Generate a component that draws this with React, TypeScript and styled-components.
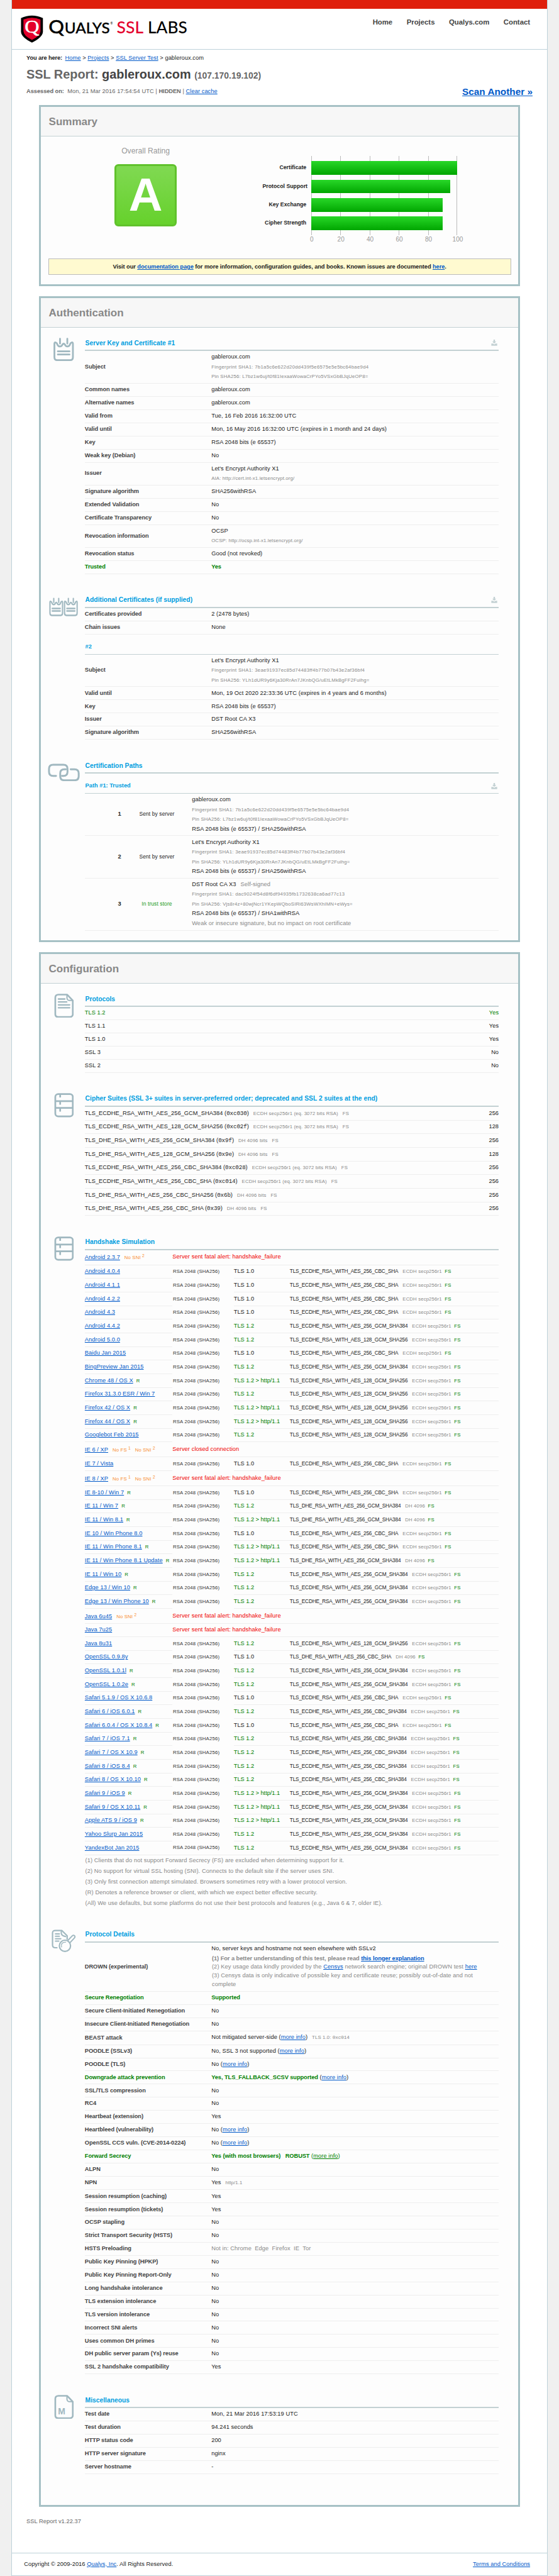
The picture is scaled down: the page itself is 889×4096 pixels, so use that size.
import React from "react";
import styled, { createGlobalStyle, css } from "styled-components";

const C = {
  frame: "#a6c1c5",
  rule: "#c3d1d3",
  hair: "#eeeeee",
  link: "#0059c9",
  title: "#009de0",
  icon: "#a0b8c0",
  green: "#008000",
  orange: "#f88c2e",
  muted: "#888888",
};

const Global = createGlobalStyle`
  html, body { margin: 0; padding: 0; background: #f0f0f0; }
  * { box-sizing: border-box; }
`;

/* ---------- page frame ---------- */

const Viewport = styled.div`
  zoom: 0.77439;
  width: 1148px;
  height: 5289px;
  font: 12px/20px "Liberation Sans", Arial, sans-serif;
  letter-spacing: 0.08px;
  color: #222;
  overflow: hidden;
`;

const Page = styled.div`
  width: 1102px;
  height: 5289px;
  margin: 0 auto;
  display: flex;
  flex-direction: column;
  background: #fff;
  border: 1px solid #bed2da;
  border-top: 0;
`;

const RedBar = styled.div`
  height: 18px;
  flex: none;
  background: #df1f0c;
`;

const Header = styled.header`
  height: 84px;
  flex: none;
  display: flex;
  justify-content: space-between;
  padding: 13px 35px 0 18px;
  border-bottom: 1px solid #bed2da;
`;

const Nav = styled.nav`
  display: flex;
  gap: 29px;
  padding-top: 4px;
  font-size: 14.67px;
  font-weight: bold;
  line-height: 22px;
  color: #444;
  letter-spacing: 0;
`;

const Link = styled.a<{ $color?: string }>`
  color: ${(p) => p.$color ?? C.link};
  text-decoration: underline;
  text-decoration-thickness: 1px;
`;

const Intro = styled.div`
  height: 114px;
  flex: none;
  padding: 0 30px;
`;

const Crumbs = styled.div`
  height: 20px;
  margin-top: 7.5px;
  b {
    letter-spacing: -0.17px;
    margin-right: 6px;
  }
`;

const ReportTitle = styled.h1`
  margin: 7.5px 0 0;
  font-size: 25.7px;
  line-height: 32px;
  letter-spacing: 0;
  color: #666;
  strong {
    color: #444;
  }
  small {
    font-size: 18px;
  }
`;

const Assessed = styled.div`
  display: flex;
  justify-content: space-between;
  align-items: center;
  height: 24px;
  margin-top: 5px;
  color: #666;
  b {
    letter-spacing: -0.05px;
  }
`;

const ScanAnother = styled.a`
  color: ${C.link};
  font-size: 19.8px;
  font-weight: bold;
  letter-spacing: 0;
  text-decoration: underline;
`;

/* ---------- panels ---------- */

const Panel = styled.section<{ $h: number }>`
  width: 988px;
  height: ${(p) => p.$h}px;
  flex: none;
  margin: 0 0 20px 56px;
  border: 4px solid ${C.frame};
  background: #fdfdfd;
`;

const PanelHead = styled.h2`
  height: 61px;
  margin: 0;
  padding: 0 16px;
  border-bottom: 1px solid ${C.rule};
  background: #f7f7f7;
  color: #888;
  font-size: 22px;
  line-height: 61px;
  letter-spacing: 0;
`;

/* ---------- summary ---------- */

const SummaryBody = styled.div`
  display: flex;
  height: 250px;
`;

const Rating = styled.div`
  width: 430px;
  padding-top: 20px;
  display: flex;
  flex-direction: column;
  align-items: center;
  color: #999;
  font-size: 15.7px;
  letter-spacing: 0;
`;

const Grade = styled.div`
  width: 128px;
  height: 128px;
  margin-top: 16px;
  border: 4px solid #60c22c;
  border-radius: 8px;
  background: linear-gradient(#80d952, #66d12c);
  color: #fff;
  font-size: 96px;
  font-weight: bold;
  line-height: 120px;
  text-align: center;
`;

const Chart = styled.div`
  width: 430px;
  margin: 40px 0 0 25px;
  display: grid;
  grid-template-columns: 100px 300px;
  align-content: start;
`;

const ChartLabels = styled.div`
  height: 162px;
  padding: 10px 10px 0 0;
  display: flex;
  flex-direction: column;
  gap: 10px;
  text-align: right;
  font-size: 11.3px;
  font-weight: bold;
  line-height: 28px;
  white-space: nowrap;
  letter-spacing: 0;
`;

const Plot = styled.div`
  height: 162px;
  padding-top: 10px;
  display: flex;
  flex-direction: column;
  gap: 10px;
  border-right: 1px solid #bbb;
  background: repeating-linear-gradient(90deg, #bbb 0 1.29px, transparent 1.29px 60px);
`;

const Bar = styled.div`
  height: 28px;
  background: linear-gradient(#28d728, #00a600);
`;

const Ticks = styled.div`
  grid-column: 2;
  display: flex;
  justify-content: space-between;
  margin: 0 -31px 0 -29px;
  color: #999;
  font-size: 13px;
  line-height: 18px;
  letter-spacing: 0;
  span {
    width: 60px;
    text-align: center;
  }
`;

const Notice = styled.div`
  width: 950px;
  height: 34px;
  margin: 0 auto;
  border: 1px solid #bbb;
  background: #fffad0;
  font-weight: bold;
  line-height: 32px;
  text-align: center;
  letter-spacing: -0.1px;
`;

/* ---------- report sections ---------- */

const SectionBox = styled.div`
  display: flex;
`;

const IconCell = styled.div<{ $top: number }>`
  width: 90px;
  flex: none;
  display: flex;
  justify-content: center;
  align-items: flex-start;
  padding: ${(p) => p.$top}px 0 0 4px;
  svg {
    display: block;
  }
`;

const SectionBody = styled.div`
  width: 850px;
  flex: none;
`;

const SectionTitle = styled.h3<{ $h: number; $thin?: boolean }>`
  height: ${(p) => p.$h}px;
  margin: 0;
  padding: 0 3px 4px 1px;
  display: flex;
  justify-content: space-between;
  align-items: flex-end;
  border-bottom: ${(p) => (p.$thin ? 1 : 2.6)}px solid ${C.rule};
  color: ${C.title};
  font-size: ${(p) => (p.$thin ? 12 : 13.33)}px;
  letter-spacing: -0.01px;
  svg {
    margin-bottom: 4px;
  }
`;

const rowRule = css`
  border-bottom: 1px solid ${C.hair};
`;

const Row = styled.div<{ $h: number }>`
  display: grid;
  grid-template-columns: 260px 1fr;
  align-items: center;
  height: ${(p) => p.$h}px;
  ${rowRule}
  white-space: nowrap;
`;

const Name = styled.div<{ $good?: boolean }>`
  font-weight: bold;
  letter-spacing: -0.11px;
  color: ${(p) => (p.$good ? C.green : "#444")};
`;

const Small = styled.div<{ $track?: number }>`
  color: ${C.muted};
  font-size: 10px;
  letter-spacing: ${(p) => p.$track ?? 0.39}px;
`;

const Tag = styled.span<{ $color?: string; $gap?: number }>`
  margin-left: ${(p) => p.$gap ?? 9}px;
  color: ${(p) => p.$color ?? C.muted};
  font-size: 10px;
  letter-spacing: 0.2px;
  sup {
    font-size: 8.5px;
    line-height: 0;
    vertical-align: 4.5px;
  }
`;

const Good = styled.b`
  color: ${C.green};
  letter-spacing: -0.1px;
`;

const Hex = styled.span`
  font-family: "Liberation Mono", monospace;
  letter-spacing: -0.2px;
`;

const Split = styled.div<{ $h: number; $good?: boolean }>`
  display: flex;
  justify-content: space-between;
  align-items: center;
  height: ${(p) => p.$h}px;
  ${rowRule}
  letter-spacing: 0.03px;
  color: ${(p) => (p.$good ? C.green : "inherit")};
`;

const PathRow = styled.div<{ $h: number }>`
  display: grid;
  grid-template-columns: 43px 110px 1fr;
  align-items: center;
  height: ${(p) => p.$h}px;
  padding-left: 50px;
  ${rowRule}
`;

const Index = styled.b`
  text-align: center;
`;

const Status = styled.div<{ $good?: boolean }>`
  text-align: center;
  font-size: 11px;
  letter-spacing: 0.1px;
  color: ${(p) => (p.$good ? "#1a9a1a" : "inherit")};
`;

const PathInfo = styled.div`
  padding-left: 17px;
`;

const Muted = styled.span<{ $gap?: number }>`
  color: ${C.muted};
  letter-spacing: 0.12px;
  margin-left: ${(p) => p.$gap ?? 0}px;
`;

const SimRow = styled.div<{ $h: number }>`
  display: grid;
  grid-template-columns: 180px 126px 1fr;
  height: ${(p) => p.$h}px;
  white-space: nowrap;
`;

const SimCell = styled.div<{ $bare?: boolean; $span?: boolean; $low?: boolean }>`
  display: flex;
  align-items: center;
  padding-top: ${(p) => (p.$low ? 2 : 0)}px;
  grid-column: ${(p) => (p.$span ? "2 / 4" : "auto")};
  border-bottom: ${(p) => (p.$bare ? "0" : `1px solid ${C.hair}`)};
`;

const KeyInfo = styled.span`
  padding: 0 0 1px 1px;
  font-size: 10px;
  letter-spacing: 0.25px;
  color: #333;
`;

const Proto = styled.span<{ $good?: boolean }>`
  width: 115px;
  letter-spacing: -0.05px;
  color: ${(p) => (p.$good ? C.green : "inherit")};
`;

const Suite = styled.span`
  font-size: 10.67px;
  letter-spacing: -0.24px;
`;

const Failure = styled.span`
  color: #f00000;
  letter-spacing: 0.1px;
`;

const Notes = styled.div`
  padding-left: 1px;
  line-height: 22px;
  letter-spacing: 0.1px;
  color: ${C.muted};
`;

const DrownNotes = styled.div`
  padding: 1px;
  line-height: 18px;
  letter-spacing: 0.12px;
  color: ${C.muted};
  b {
    letter-spacing: -0.07px;
  }
`;

const Version = styled.div`
  padding: 1px 30px 0;
  flex: 1;
  color: #666;
`;

const Footer = styled.footer`
  height: 46px;
  flex: none;
  display: flex;
  justify-content: space-between;
  align-items: center;
  padding: 0 35px 0 25px;
  border-top: 1px solid #bed2da;
`;

/* ---------- drawings ---------- */

const Logo = () => (
  <svg width="346" height="58" viewBox="0 0 346 58">
    <path d="M0.5 6 Q23 -4 45.5 6 V34 Q45 46 23 56.5 Q1 46 0.5 34 Z" fill="#000" />
    <path d="M5.5 9 Q23 2 40.5 9 V33 Q40 43 23 51 Q6 43 5.5 33 Z" fill="#e4002b" />
    <text x="8" y="36.5" fontFamily="'Liberation Serif', serif" fontSize="38" letterSpacing="0" fill="#fff" stroke="#fff" strokeWidth="0.7" textLength="30" lengthAdjust="spacingAndGlyphs">Q</text>
    <g fontFamily="Lato, sans-serif" fontWeight="500" letterSpacing="0">
      <text x="57" y="37" fontSize="36" stroke="#000" strokeWidth="0.5" textLength="32" lengthAdjust="spacingAndGlyphs">Q</text>
      <text x="90" y="37" fontSize="29.5" stroke="#000" strokeWidth="0.4" textLength="93" lengthAdjust="spacingAndGlyphs">UALYS</text>
      <text x="184" y="19" fontSize="6">®</text>
      <text x="197" y="37" fontSize="35" fill="#e4002b" textLength="55" lengthAdjust="spacingAndGlyphs">SSL</text>
      <text x="261" y="37" fontSize="35" textLength="81" lengthAdjust="spacingAndGlyphs">LABS</text>
    </g>
  </svg>
);

const Sheet = () => (
  <>
    <path d="M2 12 Q2 8.5 5 10 Q7.500 11 8 14 Q10 18 13.500 18 Q17 18 18.500 14 Q21 10.500 23.500 14 Q25 18 28.500 18 Q32.500 18 34 14 Q34.500 11 37 10 Q40 8.500 40 12 V40 Q40 46 34.500 46 H7.500 Q2 46 2 40 Z" />
    <path d="M13.500 2 V12 M28.500 2 V12 M9 28 H33 M9 34.500 H33" />
  </>
);

const stroke = {
  fill: "none",
  stroke: C.icon,
  strokeLinecap: "round" as const,
  strokeLinejoin: "round" as const,
};

const CertIcon = () => (
  <svg width="42" height="48" viewBox="0 0 42 48" {...stroke} strokeWidth="3.6">
    <Sheet />
  </svg>
);

const CertsIcon = () => (
  <svg width="60" height="39" viewBox="0 0 60 39" {...stroke} strokeWidth="3.9">
    <g transform="translate(0.5 0.5) scale(0.68 0.79)">
      <Sheet />
    </g>
    <g transform="translate(30.5 0.5) scale(0.68 0.79)">
      <Sheet />
    </g>
  </svg>
);

const ChainIcon = () => (
  <svg width="66" height="37" viewBox="0 0 66 37" {...stroke} strokeWidth="3.8">
    <path d="M17 25.5 H11 Q2.5 25.5 2.5 17 V11 Q2.5 2.5 11 2.5 H32 Q40.5 2.5 40.5 11 V17 Q40.5 25.5 32 25.5 H29" />
    <path d="M37 12 H34 Q25.500 12 25.500 20 V26 Q25.500 34.500 34 34.500 H55 Q63.500 34.500 63.500 26 V20 Q63.500 12 55 12 H47" />
  </svg>
);

const DocIcon = ({ letter }: { letter?: string }) => (
  <svg width="41" height="50" viewBox="0 0 41 50" {...stroke} strokeWidth="3.4">
    <path d="M9 2 H27 L38.500 14 V42 Q38.500 48 32 48 H9 Q2.500 48 2.500 42 V8 Q2.500 2 9 2 Z" />
    <path d="M26.500 3 V9 Q27 14 32 14 H37" strokeWidth="2.6" />
    {letter ? (
      <text x="8" y="40.500" fontFamily="'Liberation Sans', sans-serif" fontWeight="bold" fontSize="18" letterSpacing="0" fill={C.icon} stroke="none">
        {letter}
      </text>
    ) : (
      <path d="M9 11 H22 M9 17 H26 M9 23 H32 M9 29 H32" strokeWidth="3" />
    )}
  </svg>
);

const DrawersIcon = () => (
  <svg width="41" height="50" viewBox="0 0 41 50" {...stroke} strokeWidth="3.5">
    <rect x="2.500" y="2" width="36" height="46" rx="6" />
    <path d="M2.500 16.500 H38.500 M2.500 30.500 H38.500 M12.500 3 V9 M12.500 17 V24 M12.500 31 V38" strokeLinecap="butt" />
  </svg>
);

const InspectIcon = () => (
  <svg width="50" height="47" viewBox="0 0 50 47" {...stroke} strokeWidth="2.8">
    <path d="M11 37.500 H8 Q2 37.500 2 32 V7 Q2 2 8 2 H21 L32 13 V20" />
    <path d="M20 4 V8 Q21 13 29 14.500 M8 9 H16 M8 14 H16 M8 19 H19 M8 24 H15" strokeWidth="2.6" />
    <ellipse cx="27.500" cy="33.500" rx="11.500" ry="11.500" />
    <path d="M20.500 36 Q18.500 26 29 26" strokeWidth="1.800" />
    <path d="M34 22 L42.500 13 Q46 10.500 48 14 Q48.500 16 46.500 18 L38 27" strokeWidth="2.500" />
  </svg>
);

const DownloadIcon = () => (
  <svg width="13" height="13" viewBox="0 0 13 13" fill="#c3d1d3">
    <path d="M5 0 H8 V4 H10.500 L6.500 8 L2.500 4 H5 Z M0.500 8 H4 L6.500 10 L9 8 H12.500 V12.500 H0.500 Z" />
  </svg>
);

/* ---------- building blocks ---------- */

type SectionProps = {
  icon: React.ReactNode;
  iconTop: number;
  title: string;
  first?: boolean;
  download?: boolean;
  children: React.ReactNode;
};

const Section = ({ icon, iconTop, title, first, download, children }: SectionProps) => (
  <SectionBox>
    <IconCell $top={iconTop}>{icon}</IconCell>
    <SectionBody>
      <SectionTitle $h={first ? 48 : 70}>
        {title}
        {download && <DownloadIcon />}
      </SectionTitle>
      {children}
    </SectionBody>
  </SectionBox>
);

type Fact = [string, React.ReactNode, { h?: number; good?: boolean }?];

const Facts = ({ rows }: { rows: Fact[] }) => (
  <>
    {rows.map(([name, value, o]) => (
      <Row key={name} $h={o?.h ?? 27}>
        <Name $good={o?.good}>{name}</Name>
        <div>{value}</div>
      </Row>
    ))}
  </>
);

const Aside = styled.span<{ $color?: string }>`
  color: ${(p) => p.$color ?? "inherit"};
`;

const MoreInfo = ({ color }: { color?: string }) => (
  <Aside $color={color}>
    {" "}(<Link $color={color}>more info</Link>)
  </Aside>
);

/* ---------- data ---------- */

const scores: [string, number][] = [
  ["Certificate", 100],
  ["Protocol Support", 95],
  ["Key Exchange", 90],
  ["Cipher Strength", 90],
];

const leafPins = (
  <>
    <Small>Fingerprint SHA1: 7b1a5c6e622d20dd439f5e6575e5e5bc64bae9d4</Small>
    <Small $track={0.28}>Pin SHA256: L7bz1w6uj/t0f81IexaaWowaCrPYo5VSxGbBJqUeOP8=</Small>
  </>
);

const issuerPins = (
  <>
    <Small>Fingerprint SHA1: 3eae91937ec85d74483ff4b77b07b43e2af36bf4</Small>
    <Small $track={0.28}>Pin SHA256: YLh1dUR9y6Kja30RrAn7JKnbQG/uEtLMkBgFF2Fuihg=</Small>
  </>
);

const serverKey: Fact[] = [
  ["Subject", <>gableroux.com{leafPins}</>, { h: 67 }],
  ["Common names", "gableroux.com"],
  ["Alternative names", "gableroux.com"],
  ["Valid from", "Tue, 16 Feb 2016 16:32:00 UTC"],
  ["Valid until", "Mon, 16 May 2016 16:32:00 UTC (expires in 1 month and 24 days)"],
  ["Key", "RSA 2048 bits (e 65537)"],
  ["Weak key (Debian)", "No"],
  ["Issuer", <>Let's Encrypt Authority X1<Small $track={0.23}>AIA: http://cert.int-x1.letsencrypt.org/</Small></>, { h: 47 }],
  ["Signature algorithm", "SHA256withRSA"],
  ["Extended Validation", "No"],
  ["Certificate Transparency", "No"],
  ["Revocation information", <>OCSP<Small $track={0.23}>OCSP: http://ocsp.int-x1.letsencrypt.org/</Small></>, { h: 47 }],
  ["Revocation status", "Good (not revoked)"],
  ["Trusted", <Good>Yes</Good>, { good: true }],
];

const secondCert: Fact[] = [
  ["Subject", <>Let's Encrypt Authority X1{issuerPins}</>, { h: 67 }],
  ["Valid until", "Mon, 19 Oct 2020 22:33:36 UTC (expires in 4 years and 6 months)"],
  ["Key", "RSA 2048 bits (e 65537)"],
  ["Issuer", "DST Root CA X3"],
  ["Signature algorithm", "SHA256withRSA"],
];

const protocols: [string, string][] = [
  ["TLS 1.2", "Yes"],
  ["TLS 1.1", "Yes"],
  ["TLS 1.0", "Yes"],
  ["SSL 3", "No"],
  ["SSL 2", "No"],
];

const EC = "ECDH secp256r1 (eq. 3072 bits RSA)";
const DH = "DH 4096 bits";
const suites: [string, string, string, number][] = [
  ["TLS_ECDHE_RSA_WITH_AES_256_GCM_SHA384", "0xc030", EC, 256],
  ["TLS_ECDHE_RSA_WITH_AES_128_GCM_SHA256", "0xc02f", EC, 128],
  ["TLS_DHE_RSA_WITH_AES_256_GCM_SHA384", "0x9f", DH, 256],
  ["TLS_DHE_RSA_WITH_AES_128_GCM_SHA256", "0x9e", DH, 128],
  ["TLS_ECDHE_RSA_WITH_AES_256_CBC_SHA384", "0xc028", EC, 256],
  ["TLS_ECDHE_RSA_WITH_AES_256_CBC_SHA", "0xc014", EC, 256],
  ["TLS_DHE_RSA_WITH_AES_256_CBC_SHA256", "0x6b", DH, 256],
  ["TLS_DHE_RSA_WITH_AES_256_CBC_SHA", "0x39", DH, 256],
];

const suiteNames = {
  cbc: "TLS_ECDHE_RSA_WITH_AES_256_CBC_SHA",
  cbc384: "TLS_ECDHE_RSA_WITH_AES_256_CBC_SHA384",
  gcm256: "TLS_ECDHE_RSA_WITH_AES_256_GCM_SHA384",
  gcm128: "TLS_ECDHE_RSA_WITH_AES_128_GCM_SHA256",
  dhGcm: "TLS_DHE_RSA_WITH_AES_256_GCM_SHA384",
  dhCbc: "TLS_DHE_RSA_WITH_AES_256_CBC_SHA",
};

type Sim = {
  client: string;
  suite?: keyof typeof suiteNames;
  v?: "1.0" | "1.2" | "1.2 > http/1.1";
  ref?: boolean;
  noFs?: boolean;
  noSni?: boolean;
  fail?: string;
};

const ok = (client: string, v: Sim["v"], suite: Sim["suite"], ref = false): Sim => ({ client, v, suite, ref });
const H = "1.2 > http/1.1" as const;
const ALERT = "Server sent fatal alert: handshake_failure";

const sims: Sim[] = [
  { client: "Android 2.3.7", noSni: true, fail: ALERT },
  ok("Android 4.0.4", "1.0", "cbc"),
  ok("Android 4.1.1", "1.0", "cbc"),
  ok("Android 4.2.2", "1.0", "cbc"),
  ok("Android 4.3", "1.0", "cbc"),
  ok("Android 4.4.2", "1.2", "gcm256"),
  ok("Android 5.0.0", "1.2", "gcm128"),
  ok("Baidu Jan 2015", "1.0", "cbc"),
  ok("BingPreview Jan 2015", "1.2", "gcm256"),
  ok("Chrome 48 / OS X", H, "gcm128", true),
  ok("Firefox 31.3.0 ESR / Win 7", "1.2", "gcm128"),
  ok("Firefox 42 / OS X", H, "gcm128", true),
  ok("Firefox 44 / OS X", H, "gcm128", true),
  ok("Googlebot Feb 2015", "1.2", "gcm128"),
  { client: "IE 6 / XP", noFs: true, noSni: true, fail: "Server closed connection" },
  ok("IE 7 / Vista", "1.0", "cbc"),
  { client: "IE 8 / XP", noFs: true, noSni: true, fail: ALERT },
  ok("IE 8-10 / Win 7", "1.0", "cbc", true),
  ok("IE 11 / Win 7", "1.2", "dhGcm", true),
  ok("IE 11 / Win 8.1", H, "dhGcm", true),
  ok("IE 10 / Win Phone 8.0", "1.0", "cbc"),
  ok("IE 11 / Win Phone 8.1", H, "cbc", true),
  ok("IE 11 / Win Phone 8.1 Update", H, "dhGcm", true),
  ok("IE 11 / Win 10", "1.2", "gcm256", true),
  ok("Edge 13 / Win 10", "1.2", "gcm256", true),
  ok("Edge 13 / Win Phone 10", "1.2", "gcm256", true),
  { client: "Java 6u45", noSni: true, fail: ALERT },
  { client: "Java 7u25", fail: ALERT },
  ok("Java 8u31", "1.2", "gcm128"),
  ok("OpenSSL 0.9.8y", "1.0", "dhCbc"),
  ok("OpenSSL 1.0.1l", "1.2", "gcm256", true),
  ok("OpenSSL 1.0.2e", "1.2", "gcm256", true),
  ok("Safari 5.1.9 / OS X 10.6.8", "1.0", "cbc"),
  ok("Safari 6 / iOS 6.0.1", "1.2", "cbc384", true),
  ok("Safari 6.0.4 / OS X 10.8.4", "1.0", "cbc", true),
  ok("Safari 7 / iOS 7.1", "1.2", "cbc384", true),
  ok("Safari 7 / OS X 10.9", "1.2", "cbc384", true),
  ok("Safari 8 / iOS 8.4", "1.2", "cbc384", true),
  ok("Safari 8 / OS X 10.10", "1.2", "cbc384", true),
  ok("Safari 9 / iOS 9", H, "gcm256", true),
  ok("Safari 9 / OS X 10.11", H, "gcm256", true),
  ok("Apple ATS 9 / iOS 9", H, "gcm256", true),
  ok("Yahoo Slurp Jan 2015", "1.2", "gcm256"),
  ok("YandexBot Jan 2015", "1.2", "gcm256"),
];

const Simulation = ({ sim, last }: { sim: Sim; last: boolean }) => {
  const low = !!sim.noSni;
  return (
    <SimRow $h={low ? 31 : sim.fail ? 27 : 28}>
      <SimCell $low={low}>
        <Link>{sim.client}</Link>
        {sim.noFs && <Tag $color={C.orange}>No FS <sup>1</sup></Tag>}
        {sim.noSni && <Tag $color={C.orange}>No SNI <sup>2</sup></Tag>}
        {sim.ref && <Tag $color={C.green} $gap={6.5}>R</Tag>}
      </SimCell>
      {sim.fail ? (
        <SimCell $span>
          <Failure>{sim.fail}</Failure>
        </SimCell>
      ) : (
        <>
          <SimCell $bare={!last}>
            <KeyInfo>RSA 2048 (SHA256)</KeyInfo>
          </SimCell>
          <SimCell>
            <Proto $good={sim.v !== "1.0"}>TLS {sim.v}</Proto>
            <Suite>{suiteNames[sim.suite!]}</Suite>
            <Tag>{sim.suite!.startsWith("dh") ? "DH 4096" : "ECDH secp256r1"}</Tag>
            <Tag $color={C.green} $gap={6}>FS</Tag>
          </SimCell>
        </>
      )}
    </SimRow>
  );
};

const no = (name: string): Fact => [name, "No"];
const yes = (name: string): Fact => [name, "Yes"];

const details: Fact[] = [
  [
    "DROWN (experimental)",
    <>
      No, server keys and hostname not seen elsewhere with SSLv2
      <DrownNotes>
        <b>(1) For a better understanding of this test, please read <Link>this longer explanation</Link></b>
        <br />
        (2) Key usage data kindly provided by the <Link>Censys</Link> network search engine; original DROWN test <Link>here</Link>
        <br />
        (3) Censys data is only indicative of possible key and certificate reuse; possibly out-of-date and not
        <br />
        complete
      </DrownNotes>
    </>,
    { h: 101 },
  ],
  ["Secure Renegotiation", <Good>Supported</Good>, { good: true }],
  no("Secure Client-Initiated Renegotiation"),
  no("Insecure Client-Initiated Renegotiation"),
  ["BEAST attack", <>Not mitigated server-side<MoreInfo /><Tag>TLS 1.0: <Hex>0xc014</Hex></Tag></>, { h: 28 }],
  ["POODLE (SSLv3)", <>No, SSL 3 not supported<MoreInfo /></>],
  ["POODLE (TLS)", <>No<MoreInfo /></>],
  ["Downgrade attack prevention", <><Good>Yes, TLS_FALLBACK_SCSV supported</Good><MoreInfo /></>, { good: true }],
  no("SSL/TLS compression"),
  no("RC4"),
  yes("Heartbeat (extension)"),
  ["Heartbleed (vulnerability)", <>No<MoreInfo /></>],
  ["OpenSSL CCS vuln. (CVE-2014-0224)", <>No<MoreInfo /></>],
  ["Forward Secrecy", <><Good>Yes (with most browsers) &nbsp; ROBUST</Good><MoreInfo color={C.green} /></>, { good: true }],
  no("ALPN"),
  ["NPN", <>Yes<Tag>http/1.1</Tag></>, { h: 28 }],
  yes("Session resumption (caching)"),
  yes("Session resumption (tickets)"),
  no("OCSP stapling"),
  no("Strict Transport Security (HSTS)"),
  ["HSTS Preloading", <Muted>Not in: Chrome &nbsp;Edge &nbsp;Firefox &nbsp;IE &nbsp;Tor</Muted>],
  no("Public Key Pinning (HPKP)"),
  no("Public Key Pinning Report-Only"),
  no("Long handshake intolerance"),
  no("TLS extension intolerance"),
  no("TLS version intolerance"),
  no("Incorrect SNI alerts"),
  no("Uses common DH primes"),
  no("DH public server param (Ys) reuse"),
  yes("SSL 2 handshake compatibility"),
];

const misc: Fact[] = [
  ["Test date", "Mon, 21 Mar 2016 17:53:19 UTC"],
  ["Test duration", "94.241 seconds"],
  ["HTTP status code", "200"],
  ["HTTP server signature", "nginx"],
  ["Server hostname", "-"],
];

/* ---------- page ---------- */

export default function App() {
  return (
    <Viewport>
      <Global />
      <Page>
        <RedBar />
        <Header>
          <Logo />
          <Nav>
            <span>Home</span>
            <span>Projects</span>
            <span>Qualys.com</span>
            <span>Contact</span>
          </Nav>
        </Header>

        <Intro>
          <Crumbs>
            <b>You are here:</b>
            <Link>Home</Link> &gt; <Link>Projects</Link> &gt; <Link>SSL Server Test</Link> &gt; gableroux.com
          </Crumbs>
          <ReportTitle>
            SSL Report: <strong>gableroux.com</strong> <small>(107.170.19.102)</small>
          </ReportTitle>
          <Assessed>
            <span>
              <b>Assessed on:</b>&nbsp; Mon, 21 Mar 2016 17:54:54 UTC | <b>HIDDEN</b> | <Link>Clear cache</Link>
            </span>
            <ScanAnother>Scan Another »</ScanAnother>
          </Assessed>
        </Intro>

        <Panel $h={372}>
          <PanelHead>Summary</PanelHead>
          <SummaryBody>
            <Rating>
              Overall Rating
              <Grade>A</Grade>
            </Rating>
            <Chart>
              <ChartLabels>
                {scores.map(([label]) => (
                  <span key={label}>{label}</span>
                ))}
              </ChartLabels>
              <Plot>
                {scores.map(([label, value]) => (
                  <Bar key={label} style={{ width: value * 3 }} />
                ))}
              </Plot>
              <Ticks>
                {[0, 20, 40, 60, 80, 100].map((n) => (
                  <span key={n}>{n}</span>
                ))}
              </Ticks>
            </Chart>
          </SummaryBody>
          <Notice>
            Visit our <Link>documentation page</Link> for more information, configuration guides, and books. Known issues are
            documented <Link>here</Link>.
          </Notice>
        </Panel>

        <Panel $h={1327}>
          <PanelHead>Authentication</PanelHead>
          <Section icon={<CertIcon />} iconTop={21} title="Server Key and Certificate #1" first download>
            <Facts rows={serverKey} />
          </Section>
          <Section icon={<CertsIcon />} iconTop={48} title="Additional Certificates (if supplied)" download>
            <Facts
              rows={[
                ["Certificates provided", "2 (2478 bytes)"],
                ["Chain issues", "None"],
              ]}
            />
            <SectionTitle $h={41} $thin>#2</SectionTitle>
            <Facts rows={secondCert} />
          </Section>
          <Section icon={<ChainIcon />} iconTop={48.5} title="Certification Paths">
            <SectionTitle $h={41} $thin>
              Path #1: Trusted
              <DownloadIcon />
            </SectionTitle>
            <PathRow $h={87}>
              <Index>1</Index>
              <Status>Sent by server</Status>
              <PathInfo>
                gableroux.com
                {leafPins}
                RSA 2048 bits (e 65537) / SHA256withRSA
              </PathInfo>
            </PathRow>
            <PathRow $h={87}>
              <Index>2</Index>
              <Status>Sent by server</Status>
              <PathInfo>
                Let's Encrypt Authority X1
                {issuerPins}
                RSA 2048 bits (e 65537) / SHA256withRSA
              </PathInfo>
            </PathRow>
            <PathRow $h={107}>
              <Index>3</Index>
              <Status $good>In trust store</Status>
              <PathInfo>
                DST Root CA X3<Muted $gap={9}>Self-signed</Muted>
                <Small>Fingerprint SHA1: dac9024f54d8f6df94935fb1732638ca6ad77c13</Small>
                <Small $track={0.28}>Pin SHA256: Vjs8r4z+80wjNcr1YKepWQboSIRi63WsWXhIMN+eWys=</Small>
                RSA 2048 bits (e 65537) / SHA1withRSA
                <br />
                <Muted>Weak or insecure signature, but no impact on root certificate</Muted>
              </PathInfo>
            </PathRow>
          </Section>
        </Panel>

        <Panel $h={3192}>
          <PanelHead>Configuration</PanelHead>
          <Section icon={<DocIcon />} iconTop={20} title="Protocols" first>
            {protocols.map(([name, value]) => (
              <Split key={name} $h={27} $good={name === "TLS 1.2"}>
                <span>{name}</span>
                <span>{value}</span>
              </Split>
            ))}
          </Section>
          <Section
            icon={<DrawersIcon />}
            iconTop={42}
            title="Cipher Suites (SSL 3+ suites in server-preferred order; deprecated and SSL 2 suites at the end)"
          >
            {suites.map(([name, code, kx, bits]) => (
              <Split key={name} $h={28}>
                <span>
                  {name} (<Hex>{code}</Hex>)<Tag>{kx}</Tag>
                  <Tag>FS</Tag>
                </span>
                <span>{bits}</span>
              </Split>
            ))}
          </Section>
          <Section icon={<DrawersIcon />} iconTop={42} title="Handshake Simulation">
            {sims.map((sim, i) => (
              <Simulation key={sim.client} sim={sim} last={i === sims.length - 1} />
            ))}
            <Notes>
              <div>(1) Clients that do not support Forward Secrecy (FS) are excluded when determining support for it.</div>
              <div>(2) No support for virtual SSL hosting (SNI). Connects to the default site if the server uses SNI.</div>
              <div>(3) Only first connection attempt simulated. Browsers sometimes retry with a lower protocol version.</div>
              <div>(R) Denotes a reference browser or client, with which we expect better effective security.</div>
              <div>(All) We use defaults, but some platforms do not use their best protocols and features (e.g., Java 6 &amp; 7, older IE).</div>
            </Notes>
          </Section>
          <Section icon={<InspectIcon />} iconTop={43} title="Protocol Details">
            <Facts rows={details} />
          </Section>
          <Section icon={<DocIcon letter="M" />} iconTop={42} title="Miscellaneous">
            <Facts rows={misc} />
          </Section>
        </Panel>

        <Version>SSL Report v1.22.37</Version>
        <Footer>
          <span>
            Copyright © 2009-2016 <Link>Qualys, Inc</Link>. All Rights Reserved.
          </span>
          <Link>Terms and Conditions</Link>
        </Footer>
      </Page>
    </Viewport>
  );
}
